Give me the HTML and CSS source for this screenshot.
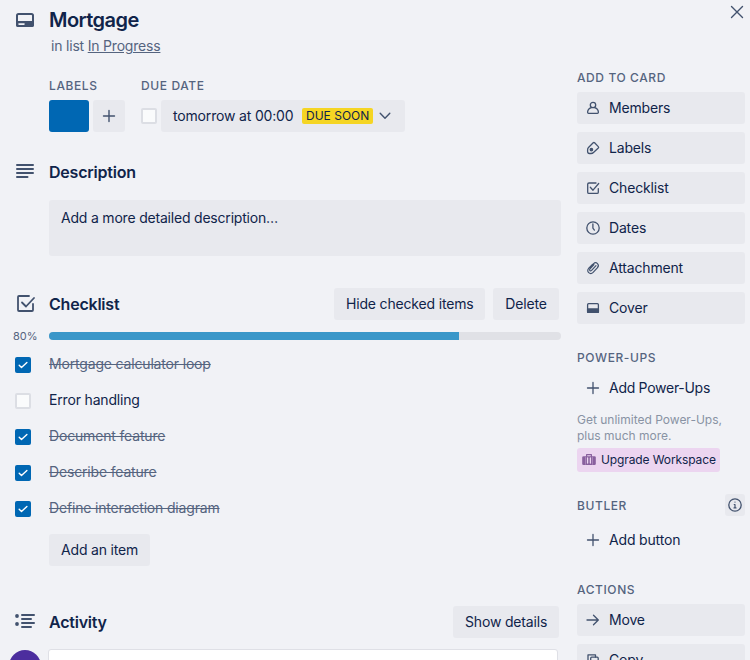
FILE: index.html
```
<!DOCTYPE html>
<html lang="en">
<head>
<meta charset="utf-8">
<title>Mortgage</title>
<link rel="stylesheet" href="styles.css">
</head>
<body>
<svg class="defs" width="0" height="0">
  <symbol id="plus" viewBox="0 0 16 16"><path d="M8 2.500v11M2.500 8h11"/></symbol>
  <symbol id="tick" viewBox="0 0 16 16"><path d="M4.200 8.200l2.300 2.300 5.400-5"/></symbol>
  <symbol id="check-square" viewBox="0 0 16 16"><path d="M11 3H4Q2.700 3 2.700 4.200v8Q2.700 13.400 4 13.400h8q1.300 0 1.300-1.200V8.600M5.300 7.300l2.700 2.900 5.700-6.700"/></symbol>
</svg>
<div class="card">
  <main>
    <header class="row title-row">
      <svg class="icon" width="18" height="14" viewBox="0 0 18 14"><rect x="1" y="1" width="16" height="12" rx="1.500"/><path d="M1 9h16v3q0 1-1 1H2q-1 0-1-1z" class="solid"/><path d="M3 11.100h5" class="light"/></svg>
      <h1>Mortgage</h1>
    </header>
    <p class="in-list">in list <a>In Progress</a></p>
    <div class="details">
      <section><h3>LABELS</h3>
        <div class="controls"><span class="label"></span><button class="add-label"><svg class="thin" width="16" height="16"><use href="#plus"/></svg></button></div>
      </section>
      <section><h3>DUE DATE</h3>
        <div class="controls due"><span class="box"></span><button class="date"><span class="date-text">tomorrow at 00:00</span><span class="badge">DUE SOON</span><svg class="thin" width="12" height="8" viewBox="0 0 12 8"><path d="M1.200 1.300L6 6.300l4.800-5"/></svg></button></div>
      </section>
    </div>

    <header class="row desc-row">
      <svg class="icon lines" width="18" height="16" viewBox="0 0 18 16"><path d="M1 2h16M1 6h16M1 10h16M1 14h10.500"/></svg>
      <h2>Description</h2>
    </header>
    <div class="description">Add a more detailed description…</div>

    <header class="row check-row">
      <svg class="icon check-icon" width="24" height="24" viewBox="0 0 24 24"><path d="M16 4H6Q5 4 5 5v13q0 1 1 1h13q1 0 1-1v-6M9 10.500l4 4L21 6"/></svg>
      <h2>Checklist</h2>
      <button class="hide">Hide checked items</button><button class="delete">Delete</button>
    </header>
    <div class="progress"><span>80%</span><div class="track"><div class="fill" style="width:80%"></div></div></div>
    <ul>
      <li class="done"><span class="box"><svg width="16" height="16"><use href="#tick"/></svg></span><span>Mortgage calculator loop</span></li>
      <li><span class="box"></span><span>Error handling</span></li>
      <li class="done"><span class="box"><svg width="16" height="16"><use href="#tick"/></svg></span><span>Document feature</span></li>
      <li class="done"><span class="box"><svg width="16" height="16"><use href="#tick"/></svg></span><span>Describe feature</span></li>
      <li class="done"><span class="box"><svg width="16" height="16"><use href="#tick"/></svg></span><span>Define interaction diagram</span></li>
    </ul>
    <button class="add-item">Add an item</button>

    <header class="row activity-row">
      <svg class="icon list-icon" width="20" height="16" viewBox="0 0 20 16"><path d="M7 2h12M7 6h9M7 10h12M7 14h9"/><circle cx="2" cy="3" r="1.900"/><circle cx="2" cy="11" r="1.900"/></svg>
      <h2>Activity</h2>
      <button class="show">Show details</button>
    </header>
    <div class="comment"><span class="avatar"></span><div class="input"></div></div>
  </main>

  <aside>
    <div class="close"><svg class="thin" width="14" height="14" viewBox="0 0 14 14"><path d="M1.500 1.500l11 11M12.500 1.500l-11 11"/></svg></div>
    <h3>ADD TO CARD</h3>
    <nav>
      <button><svg width="16" height="16" viewBox="0 0 16 16"><circle cx="8" cy="5" r="2.700"/><path d="M6.200 7.600Q2.700 8.800 2.600 12.300q0 1 1 1h8.800q1 0 1-1Q13.300 8.800 9.800 7.600"/></svg>Members</button>
      <button><svg width="16" height="16" viewBox="0 0 16 16"><path d="M8.200 2.800L3.500 7.500Q2.600 8.400 2.600 10v1.600q0 1.900 1.900 1.900H6q1.500 0 2.500-1L13.300 8q.7-.7 0-1.400L9.600 2.800q-.7-.7-1.400 0z"/><circle cx="6.400" cy="9.600" r="1.200" class="solid"/></svg>Labels</button>
      <button><svg width="16" height="16"><use href="#check-square"/></svg>Checklist</button>
      <button><svg width="16" height="16" viewBox="0 0 16 16"><circle cx="8" cy="8" r="6.200"/><path d="M7.900 4v4.100l1.500 2"/></svg>Dates</button>
      <button><svg width="16" height="16" viewBox="0 0 16 16"><path d="M7.500 4.300L3.800 8.200c-3.100 3.400 1.400 7.100 4.300 4.200l4.200-4.500c2.900-3.300-1.100-6.900-3.900-4L5 7.600M11 5.600l-4.400 4.800c-1.300 1.300-2.800-.2-1.600-1.500l4-4.300" class="clip"/></svg>Attachment</button>
      <button><svg width="16" height="16" viewBox="0 0 16 16"><rect x="2.600" y="3.700" width="10.800" height="8.700" rx="1"/><path d="M2.600 9h10.800v3.300H2.600z" class="solid"/></svg>Cover</button>
    </nav>
    <h3 class="power">POWER-UPS</h3>
    <button class="plain power-add"><svg width="16" height="16"><use href="#plus"/></svg>Add Power-Ups</button>
    <p class="hint">Get unlimited Power-Ups,<br>plus much more.</p>
    <button class="upgrade"><svg width="14" height="12" viewBox="0 0 14 12"><path class="solid" d="M1.500 2.300h11q1.300 0 1.300 1.300v6.200q0 1.300-1.300 1.300h-11q-1.300 0-1.300-1.300V3.600q0-1.300 1.300-1.300z"/><path d="M4.600 2.500V.7h4.800v1.800"/><path class="slots" d="M3.500 3.300v7M10.500 3.300v7"/><path class="panels" d="M5.600 4v5M8.400 4v5"/></svg>Upgrade Workspace</button>
    <div class="butler"><h3>BUTLER</h3><span class="info"><svg width="16" height="16" viewBox="0 0 16 16"><circle cx="8" cy="8" r="6.200"/><path class="info-mark" d="M7.200 7.500H8v3.300M7 10.900h2M8 5v.1"/></svg></span></div>
    <button class="plain"><svg width="16" height="16"><use href="#plus"/></svg>Add button</button>
    <h3 class="actions">ACTIONS</h3>
    <nav>
      <button><svg width="16" height="16" viewBox="0 0 16 16"><path d="M2 8h11M8.500 3.200L13.300 8l-4.800 4.800"/></svg>Move</button>
      <button><svg width="16" height="16" viewBox="0 0 16 16"><path d="M5 10H3V2.800h7.500V5"/><rect x="5.700" y="5.200" width="7.500" height="8.500" rx="1"/></svg>Copy</button>
    </nav>
  </aside>
</div>
</body>
</html>
```
FILE: styles.css
```
* { box-sizing: border-box; }
body { margin: 0; height: 660px; overflow: hidden; background: #f1f2f6; color: #10244a; font: 14px/20px Inter, "Liberation Sans", sans-serif; letter-spacing: -.17px; }
h1, h2, h3, p, ul { margin: 0; padding: 0; }
.defs { display: none; }
.card { display: grid; grid-template-columns: 561px 168px; gap: 16px; height: 660px; overflow: hidden; }
main, aside { min-width: 0; }
svg { fill: none; stroke: #42526e; stroke-width: 1.300; stroke-linecap: round; stroke-linejoin: round; flex: none; }
.solid { fill: #42526e; }
.light { stroke: #f1f2f6; stroke-width: 1.600; }
.icon { stroke-width: 2; margin-right: 15px; }
.lines { margin-bottom: 2px; }
.thin { stroke-width: 1.400; }
.clip { stroke-width: 1.200; }
.row { display: flex; align-items: center; padding-left: 16px; height: 32px; }
h1 { font-size: 20px; line-height: 24px; font-weight: 600; letter-spacing: -.55px; }
h2 { font-size: 16px; line-height: 20px; font-weight: 600; letter-spacing: -.22px; }
h3 { font-size: 12px; line-height: 20px; font-weight: 500; letter-spacing: .6px; color: #55647f; white-space: nowrap; }
.title-row { margin-top: 4px; }
.in-list { padding-left: 51px; color: #55647f; letter-spacing: -.2px; }
.in-list a { text-decoration: underline; }
.details { display: flex; gap: 16px; margin: 20px 0 0 49px; }
.controls { display: flex; gap: 4px; margin-top: 4px; align-items: center; }
.label { width: 40px; height: 32px; border-radius: 3px; background: #0067b3; }
button { font: inherit; letter-spacing: inherit; color: inherit; border: 0; border-radius: 3px; background: #e8e9ee; height: 32px; padding: 0 12px; white-space: nowrap; }
.add-label { width: 32px; padding: 0 8px; display: flex; align-items: center; }
.box { display: block; width: 16px; height: 16px; border: 2px solid #dcdee4; border-radius: 2px; background: #fafbfc; flex: none; }
.date { display: flex; align-items: center; width: 244px; }
.date-text { width: 129px; text-align: left; }
.badge { background: #f5d523; border-radius: 2px; width: 71px; height: 16px; padding: 0 4px; font-size: 12px; line-height: 16px; letter-spacing: 0; margin-right: 6px; text-align: left; }
.desc-row { margin-top: 24px; }
.description { margin: 12px 0 0 49px; height: 56px; background: #e8e9ee; border-radius: 3px; padding: 8px 12px; letter-spacing: -.2px; }
.check-row { margin-top: 32px; padding-left: 13px; padding-right: 2px; }
.check-icon { margin-right: 12px; stroke-width: 1.800; }
.check-row h2, .activity-row h2 { margin-right: auto; }
.hide { width: 151px; margin-right: 8px; }
.delete { width: 66px; }
.progress { display: flex; align-items: center; height: 8px; margin-top: 12px; }
.progress span { width: 49px; padding-left: 13px; font-size: 11px; letter-spacing: 0; color: #55647f; }
.track { flex: 1; height: 8px; border-radius: 4px; background: #e0e1e6; overflow: hidden; }
.fill { height: 8px; background: #3a97c9; }
ul { list-style: none; margin-top: 6px; }
li { display: flex; height: 36px; padding: 8px 0 0 15px; gap: 18px; }
li .box { margin-top: 3px; }
.done { color: #55647f; text-decoration: line-through; }
.done .box { border: 0; background: #0067b3; }
.done svg { display: block; stroke: #fff; stroke-width: 1.400; }
.add-item { display: block; width: 101px; margin: 8px 0 0 49px; }
.activity-row { margin-top: 40px; padding-left: 15px; padding-right: 2px; }
.list-icon { margin: 0 14px 2px 0; }
.list-icon circle { fill: #42526e; stroke: none; }
.show { width: 106px; }
.comment { display: flex; margin-top: 11px; padding-left: 9px; }
.avatar { width: 32px; height: 32px; border-radius: 50%; background: #4c2e9e; margin: 1px 7px 0 0; }
.input { width: 510px; height: 40px; background: #fff; border-radius: 3px; border: 1px solid #dfe0e6; }
.close { height: 68px; padding: 5px 1px 0 0; display: flex; justify-content: flex-end; align-items: flex-start; }
nav { display: grid; gap: 8px; margin-top: 4px; }
nav button, .plain { display: flex; align-items: center; gap: 8px; padding: 0 8px; width: 168px; }
.plain { background: none; margin-top: 4px; }
.power-add { letter-spacing: -.28px; }
.power { margin-top: 24px; }
.hint { color: #8993a4; font-size: 12px; line-height: 16px; letter-spacing: 0; margin-top: 8px; }
.upgrade { margin-top: 4px; width: 143px; height: 24px; background: #ecd5f0; display: flex; align-items: center; gap: 5px; padding: 0 5px; font-size: 12px; letter-spacing: -.11px; }
.upgrade svg { stroke: #89609e; stroke-width: 1.200; }
.upgrade .solid { fill: #89609e; stroke: none; }
.upgrade .slots { stroke: #b995c6; stroke-width: .7; }
.upgrade .panels { stroke: #ecd5f0; stroke-width: 1.300; }
.butler { display: flex; justify-content: space-between; align-items: center; margin-top: 22px; height: 22px; }
.butler h3 { padding-top: 2px; }
.info { width: 20px; height: 22px; display: flex; align-items: center; justify-content: center; background: #e8e9ee; border-radius: 3px; }
.info-mark { stroke-width: 1.200; }
.butler + .plain { margin-top: 8px; }
.actions { margin-top: 24px; }
```
